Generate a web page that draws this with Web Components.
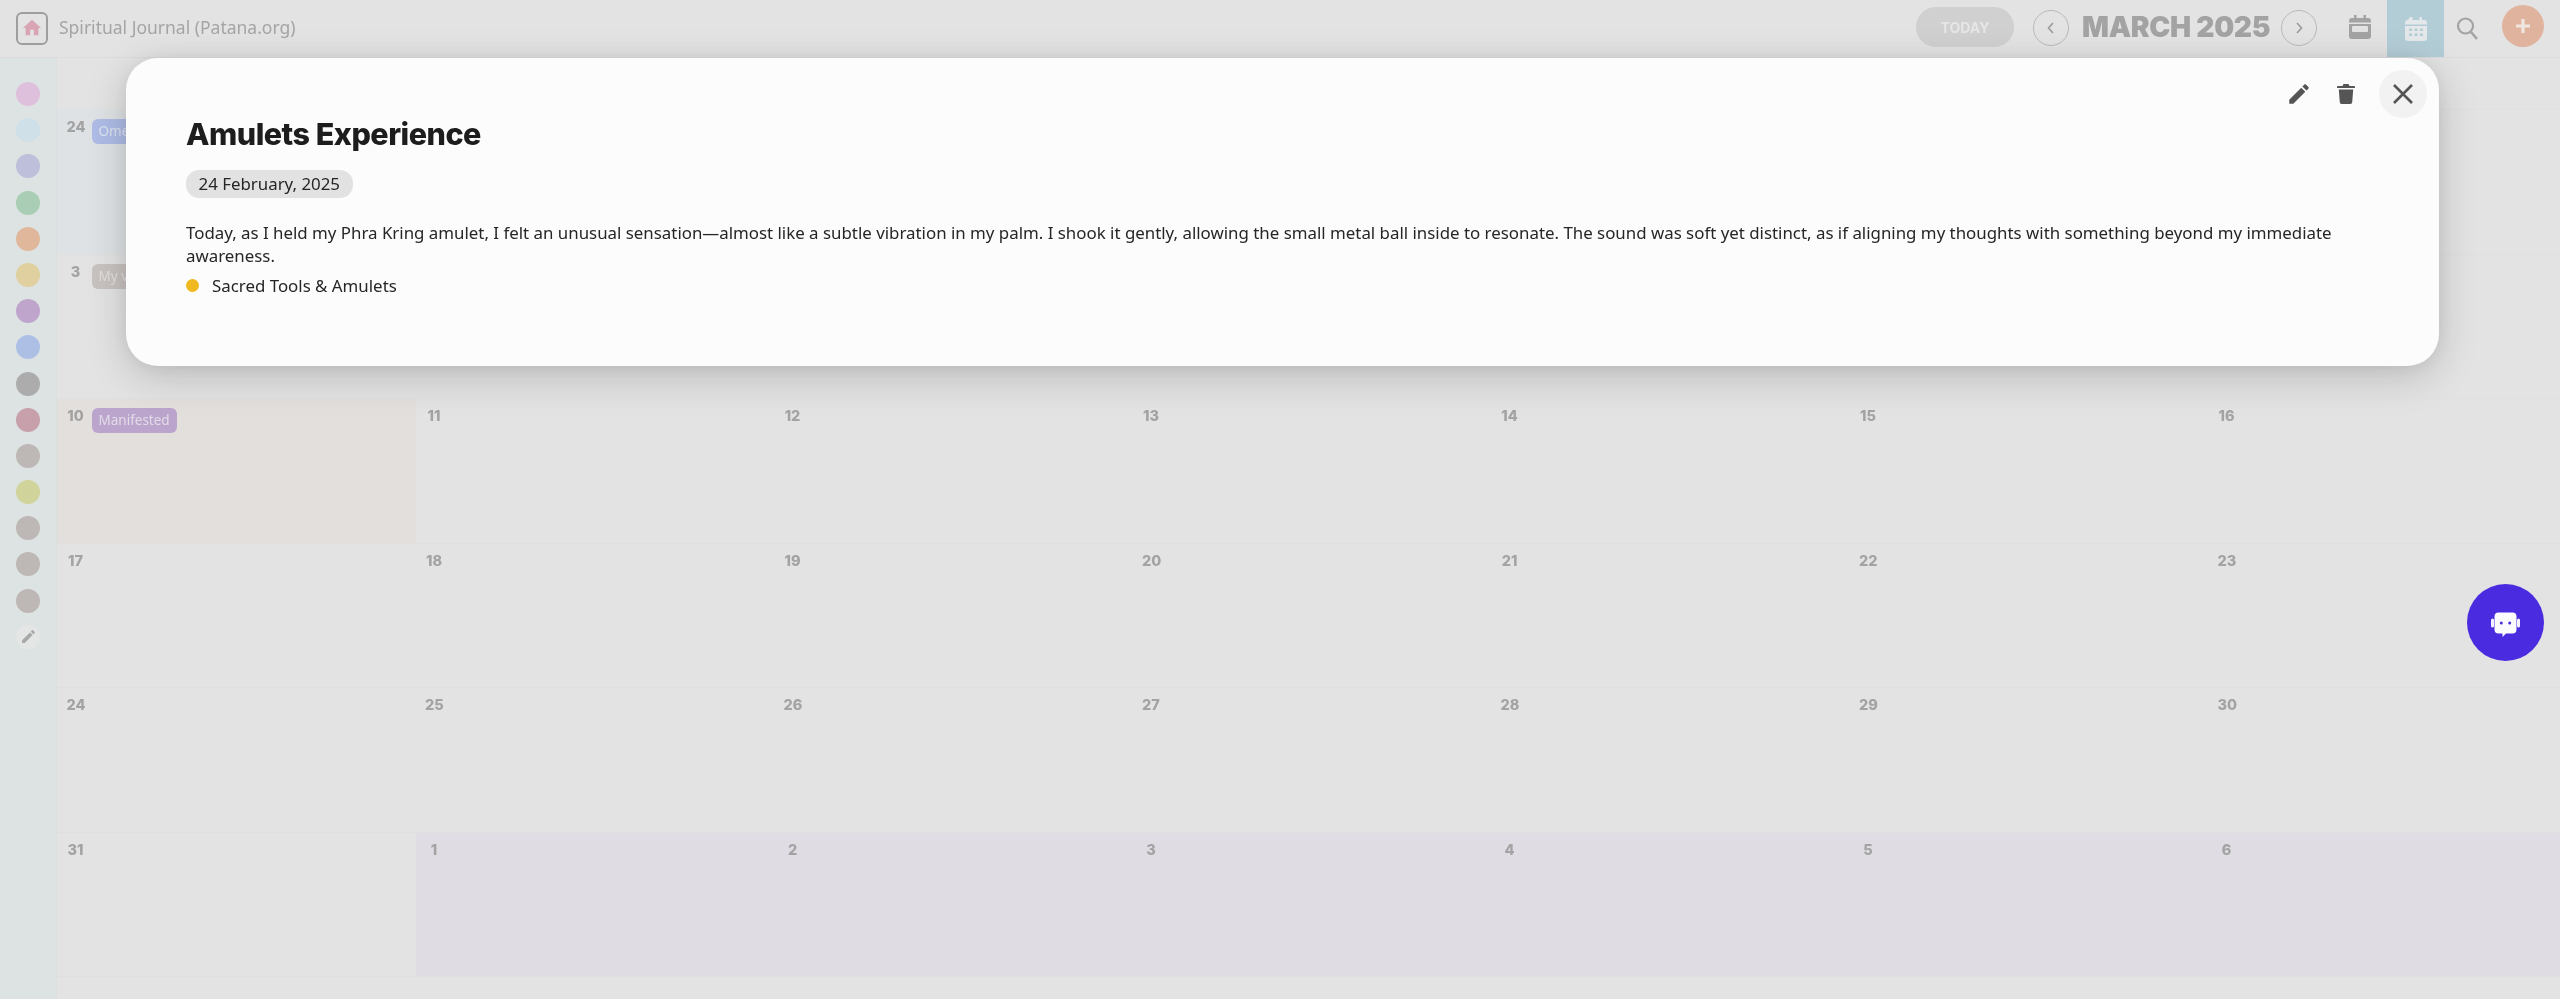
<!DOCTYPE html>
<html lang="en">
<head>
<meta charset="utf-8">
<title>Spiritual Journal</title>
<style>
html,body{margin:0;height:100%;overflow:hidden;background:#e3e3e3;font-family:"Noto Sans",sans-serif}
</style>
</head>
<body>
<app-shell>
  <top-bar></top-bar>
  <div slot="main" style="display:flex;flex:1;min-height:0">
    <side-rail></side-rail>
    <month-grid>
      <cal-cell day="24" tint="prev"><cal-badge color="#aebce6" ink="#dde3f0">Omens</cal-badge></cal-cell>
      <cal-cell></cal-cell><cal-cell></cal-cell><cal-cell></cal-cell><cal-cell></cal-cell><cal-cell></cal-cell><cal-cell></cal-cell>
      <cal-cell day="3"><cal-badge color="#c8c3c0" ink="#e2dfdd">My vision</cal-badge></cal-cell>
      <cal-cell></cal-cell><cal-cell></cal-cell><cal-cell></cal-cell><cal-cell></cal-cell><cal-cell></cal-cell><cal-cell></cal-cell>
      <cal-cell day="10" tint="today"><cal-badge color="#bba5cc" ink="#e3dbe8">Manifested</cal-badge></cal-cell>
      <cal-cell day="11"></cal-cell><cal-cell day="12"></cal-cell><cal-cell day="13"></cal-cell><cal-cell day="14"></cal-cell><cal-cell day="15"></cal-cell><cal-cell day="16"></cal-cell>
      <cal-cell day="17"></cal-cell><cal-cell day="18"></cal-cell><cal-cell day="19"></cal-cell><cal-cell day="20"></cal-cell><cal-cell day="21"></cal-cell><cal-cell day="22"></cal-cell><cal-cell day="23"></cal-cell>
      <cal-cell day="24"></cal-cell><cal-cell day="25"></cal-cell><cal-cell day="26"></cal-cell><cal-cell day="27"></cal-cell><cal-cell day="28"></cal-cell><cal-cell day="29"></cal-cell><cal-cell day="30"></cal-cell>
      <cal-cell day="31"></cal-cell><cal-cell day="1" tint="next"></cal-cell><cal-cell day="2" tint="next"></cal-cell><cal-cell day="3" tint="next"></cal-cell><cal-cell day="4" tint="next"></cal-cell><cal-cell day="5" tint="next"></cal-cell><cal-cell day="6" tint="next"></cal-cell>
    </month-grid>
  </div>
</app-shell>
<entry-dialog heading="Amulets Experience" date="24 February, 2025" category="Sacred Tools &amp; Amulets">
Today, as I held my Phra Kring amulet, I felt an unusual sensation—almost like a subtle vibration in my palm. I shook it gently, allowing the small metal ball inside to resonate. The sound was soft yet distinct, as if aligning my thoughts with something beyond my immediate awareness.
</entry-dialog>
<chat-fab></chat-fab>
<script>
const define=(name,html,init)=>customElements.define(name,class extends HTMLElement{
  constructor(){super();this.attachShadow({mode:"open"}).innerHTML=html;}
  connectedCallback(){if(init)init(this,this.shadowRoot);}
});
const icons={
 pencil:'M3 17.25V21h3.75L17.81 9.94l-3.75-3.75L3 17.25zM20.71 7.04c.39-.39.39-1.02 0-1.41l-2.34-2.34c-.39-.39-1.02-.39-1.41 0l-1.83 1.83 3.75 3.75 1.83-1.83z',
 home:'M10 20v-6h4v6h5v-8h3L12 3 2 12h3v8z'
};
define("app-shell",`<style>:host{display:flex;flex-direction:column;width:2560px;height:999px;overflow:hidden;background:#e3e3e3}
::slotted([slot=main]){flex:1}</style><slot></slot><slot name="main"></slot>`);

define("top-bar",`<style>
:host{display:flex;align-items:center;height:57px;flex:none;padding:0 16px;box-sizing:content-box;border-bottom:1px solid #dcdcdc;color:#a5a5a5;filter:blur(.5px)}
.home{width:28px;height:29px;border:2px solid #9e9e9e;border-radius:6px;display:flex;align-items:center;justify-content:center;margin-top:-1px}
.name{font-size:17.500px;margin-left:11px;margin-top:-4px;flex:1}
.today{width:98px;height:40px;border-radius:20px;background:#d0d0d0;color:#e6e6e6;font:700 14px Inter,sans-serif;display:flex;align-items:center;justify-content:center;margin-top:-3px}
.nav{width:36px;height:36px;border:1px solid #b8b8b8;border-radius:50%;box-sizing:border-box;display:flex;align-items:center;justify-content:center;margin-top:-2px}
.month{font:900 28.200px Inter,sans-serif;color:#a3a3a3;width:186px;white-space:nowrap;margin:-4px 13px 0;letter-spacing:-.3px}
.ic{display:flex;align-items:center;justify-content:center}
.tab{width:57px;height:57px;background:#b3cdd6;margin:0 0 0 16.500px;align-self:flex-start}
.add{width:42px;height:42px;border-radius:50%;background:#e0b39e;margin:-5px 0 0 24px}
</style>
<div class="home"><svg width="22" height="22" viewBox="0 0 24 24"><path fill="#d9a5b5" d="${icons.home}"/></svg></div>
<div class="name">Spiritual Journal (Patana.org)</div>
<div class="today">TODAY</div>
<div class="nav" style="margin-left:19px"><svg width="12" height="16" viewBox="0 0 12 16"><path d="M8 3 3.500 8 8 13" fill="none" stroke="#9a9a9a" stroke-width="1.600"/></svg></div>
<div class="month">MARCH 2025</div>
<div class="nav"><svg width="12" height="16" viewBox="0 0 12 16"><path d="M4 3l4.500 5L4 13" fill="none" stroke="#9a9a9a" stroke-width="1.600"/></svg></div>
<div class="ic" style="margin:-3px 0 0 31.500px"><svg width="22" height="24" viewBox="0 0 22 24"><path fill="#a3a3a3" d="M5 0h2.500v3h7V0H17v3h2a3 3 0 0 1 3 3v15a3 3 0 0 1-3 3H3a3 3 0 0 1-3-3V6a3 3 0 0 1 3-3h2z"/><rect x="3" y="11" width="16" height="6" fill="#e2e2e2" rx="1"/><rect x="0" y="7.500" width="22" height="1.500" fill="#e2e2e2"/></svg></div>
<div class="ic tab"><svg width="22" height="24" viewBox="0 0 22 24"><path fill="#e4e8ea" d="M5 0h2.500v3h7V0H17v3h2a3 3 0 0 1 3 3v15a3 3 0 0 1-3 3H3a3 3 0 0 1-3-3V6a3 3 0 0 1 3-3z"/><path fill="#b3cdd6" d="M0 7.500h22V9H0zM4 11.500h3V14H4zM9.500 11.500h3V14h-3zM15 11.500h3V14h-3zM4 16.500h3V19H4zM9.500 16.500h3V19h-3zM15 16.500h3V19h-3z"/></svg></div>
<div class="ic" style="margin:-1px 0 0 12px"><svg width="22" height="24" viewBox="0 0 22 24"><circle cx="9.500" cy="10" r="7.500" fill="none" stroke="#a3a3a3" stroke-width="2.200"/><path d="M15 16l6 7" stroke="#a3a3a3" stroke-width="2.600"/></svg></div>
<div class="ic add"><svg width="16" height="16" viewBox="0 0 16 16"><path d="M8 1v14M1 8h14" stroke="#f0e6e0" stroke-width="3.200"/></svg></div>`);

define("side-rail",`<style>
:host{display:flex;flex-direction:column;align-items:center;gap:12.200px;width:56px;flex:none;padding-top:24px;box-sizing:content-box;background:#dde3e3;border-right:1px solid #dadfdf;filter:blur(.4px)}
i{display:block;width:24px;height:24px;border-radius:50%;flex:none}
.edit{background:#e4e6e6;display:flex;align-items:center;justify-content:center}
</style><div id="l" style="display:contents"></div>`,(h,s)=>{
  const c=["#dfc0dc","#cfe0e8","#bdbfdb","#a9cdb5","#e0b79b","#e0d09f","#bfa5cc","#aebfe6","#acacac","#c7a0ac","#bdb7b5","#d0d39a","#bdb7b5","#bdb7b5","#bdb7b5"];
  s.getElementById("l").innerHTML=c.map(x=>`<i style="background:${x}"></i>`).join("")+`<i class="edit"><svg width="17" height="17" viewBox="0 0 24 24"><path fill="#a8a8a8" d="${icons.pencil}"/></svg></i>`;
});

define("month-grid",`<style>
:host{flex:1;display:grid;grid-template-columns:repeat(7,358.500px);grid-template-rows:52px repeat(6,144.500px);align-content:start;min-width:0;overflow:hidden}
.head{grid-column:1/-1;border-bottom:1px solid #e0e0e0}
</style><div class="head"></div><slot></slot>`);

define("cal-cell",`<style>
:host{display:flex;align-items:flex-start;gap:7px;padding:7px 0 0 9.500px;box-sizing:border-box;border-bottom:1px solid #e0e0e0;min-width:0;overflow:hidden;filter:blur(.4px)}
:host([tint=prev]){background:#dee2e4}
:host([tint=today]){background:#e3dfdc}
:host([tint=next]){background:#dfdce3}
.n{width:18px;margin-top:1px;text-align:center;font:800 14.500px/18px Inter,sans-serif;color:#a3a3a3}
</style><span class="n"></span><slot></slot>`,(h,s)=>{s.querySelector(".n").textContent=h.getAttribute("day")||"";});

define("cal-badge",`<style>
:host{display:inline-block;height:25px;line-height:24px;margin-top:2px;padding:0 7px;border-radius:6px;font-size:13.500px;white-space:nowrap;background:var(--b);color:var(--i)}
</style><slot></slot>`,(h)=>{h.style.setProperty("--b",h.getAttribute("color"));h.style.setProperty("--i",h.getAttribute("ink"));});

define("entry-dialog",`<style>
:host{position:fixed;left:126px;top:58px;width:2313px;height:308px;box-sizing:border-box;background:#fcfcfc;border-radius:32px;box-shadow:0 10px 40px rgba(0,0,0,.18),0 0 20px rgba(0,0,0,.06);padding:58px 60px 0;color:#222;z-index:5}
h1{margin:0;font:800 30.500px/36px Inter,sans-serif;color:#1d1d1d;letter-spacing:-.5px}
.date{display:inline-block;height:28px;line-height:27px;margin-top:18px;padding:0 12.500px;border-radius:13px;background:#e2e2e2;font-size:16.870px;color:#262626}
p{margin:24px 0 0;font-size:16.870px;line-height:22.500px;color:#262626}
.cat{display:flex;align-items:center;font-size:16.870px;line-height:22px;margin-top:8px;color:#262626}
.cat i{width:13px;height:13px;border-radius:50%;background:#f0b91f;margin:-2px 13px 0 0}
.acts{position:absolute;right:12px;top:11px;display:flex;align-items:center}
.acts span{display:flex;align-items:center;justify-content:center}
.x{width:48px;height:48px;border-radius:50%;background:#f2f2f2;margin:1px 0 0 20px}
</style>
<div class="acts">
 <span style="width:26px;height:26px"><svg width="26" height="26" viewBox="0 0 24 24"><path fill="#555" d="${icons.pencil}"/></svg></span>
 <span style="width:26px;height:26px;margin-left:21px"><svg width="18" height="20" viewBox="0 0 18 20"><path fill="#555" d="M6.500 0h5l1 2H17a1 1 0 0 1 1 1v1H0V3a1 1 0 0 1 1-1h4.500zM1.800 5.500h14.400L15.200 18.300A1.800 1.800 0 0 1 13.400 20H4.600a1.800 1.800 0 0 1-1.800-1.700z"/></svg></span>
 <span class="x"><svg width="22" height="22" viewBox="0 0 22 22"><path d="M2 2l18 18M20 2 2 20" stroke="#555" stroke-width="2.600"/></svg></span>
</div>
<h1></h1><span class="date"></span><p><slot></slot></p><div class="cat"><i></i><span id="c"></span></div>`,(h,s)=>{
  s.querySelector("h1").textContent=h.getAttribute("heading");
  s.querySelector(".date").textContent=h.getAttribute("date");
  s.getElementById("c").textContent=h.getAttribute("category");
});

define("chat-fab",`<style>
:host{position:fixed;left:2467px;top:584px;width:77px;height:77px;border-radius:50%;background:#4a2be0;display:flex;align-items:center;justify-content:center;z-index:6}
</style><svg width="29" height="28" viewBox="0 0 29 28"><rect x="0" y="9.500" width="3" height="9" rx="1.500" fill="#f4f2fe"/><rect x="26" y="9.500" width="3" height="9" rx="1.500" fill="#f4f2fe"/><path fill="#fcfcff" d="M7.500 3.500h14a4 4 0 0 1 4 4v13a4 4 0 0 1-4 4H15L11.500 28v-3.500h-4a4 4 0 0 1-4-4v-13a4 4 0 0 1 4-4z"/><circle cx="10.300" cy="14" r="1.500" fill="#4a2be0"/><circle cx="18.700" cy="14" r="1.500" fill="#4a2be0"/></svg>`);
</script>
</body>
</html>
